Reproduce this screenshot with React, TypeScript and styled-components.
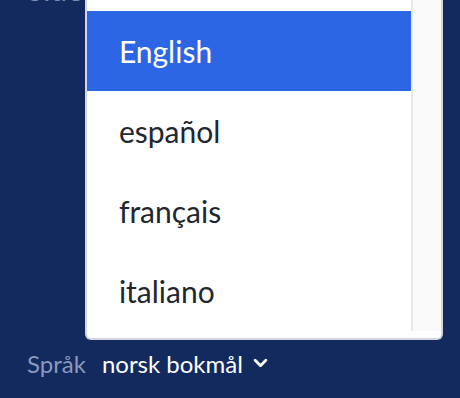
import React from 'react'
import styled, { createGlobalStyle } from 'styled-components'

const languages = ['Deutsch', 'English', 'español', 'français', 'italiano']
const selected = 'English'

const GlobalStyle = createGlobalStyle`
  html, body {
    margin: 0;
    height: 100%;
    overflow: hidden;
  }
  body {
    font-family: Lato, 'Noto Sans', sans-serif;
    background: #132a5f;
  }
`

const App: React.FC = () => {
  return (
    <Page>
      <GlobalStyle />
      <Heading>Sider</Heading>
      <Footer>
        <Label>Språk</Label>
        <Select>
          <Menu>
            <List>
              {languages.map((lang) => (
                <Item key={lang} active={lang === selected}>
                  {lang}
                </Item>
              ))}
            </List>
            <Track />
          </Menu>
          <SelectButton>
            norsk bokmål
            <Chevron viewBox='0 0 14 10'>
              <polyline points='2,2 7,7 12,2' />
            </Chevron>
          </SelectButton>
        </Select>
      </Footer>
    </Page>
  )
}

const Page = styled.div`
  height: 398px;
  box-sizing: border-box;
  padding: 0 27px 15px;
  display: flex;
  flex-direction: column;
  overflow: hidden;
`
const Heading = styled.div`
  font-size: 30px;
  line-height: 30px;
  margin-top: -26px;
  color: #8090b4;
`
const Footer = styled.div`
  margin-top: auto;
  display: flex;
  align-items: center;
  gap: 16px;
  font-size: 24px;
  height: 40px;
`
const Label = styled.span`
  color: #8a99bb;
`
const Select = styled.div`
  position: relative;
`
const SelectButton = styled.div`
  display: flex;
  align-items: center;
  gap: 10px;
  color: #ffffff;
`
const Chevron = styled.svg`
  width: 15px;
  height: 11px;
  fill: none;
  stroke: #ffffff;
  stroke-width: 2.6;
  stroke-linecap: round;
  stroke-linejoin: round;
`
const Menu = styled.div`
  position: absolute;
  left: -17px;
  bottom: calc(100% + 9px);
  width: 358px;
  box-sizing: border-box;
  display: flex;
  background: #ffffff;
  border: 2px solid #d3d6dc;
  border-top: none;
  border-radius: 0 0 6px 6px;
  padding-bottom: 7px;
`
const List = styled.div`
  flex: 1;
  display: flex;
  flex-direction: column;
`
const Item = styled.div<{ active?: boolean }>`
  height: 80px;
  display: flex;
  align-items: center;
  padding-left: 32px;
  font-size: 30px;
  color: ${(p) => (p.active ? '#ffffff' : '#23262e')};
  background: ${(p) => (p.active ? '#2d66e4' : 'transparent')};
`
const Track = styled.div`
  width: 28px;
  background: #fafafa;
  border-left: 2px solid #e8e8e8;
`

export default App
